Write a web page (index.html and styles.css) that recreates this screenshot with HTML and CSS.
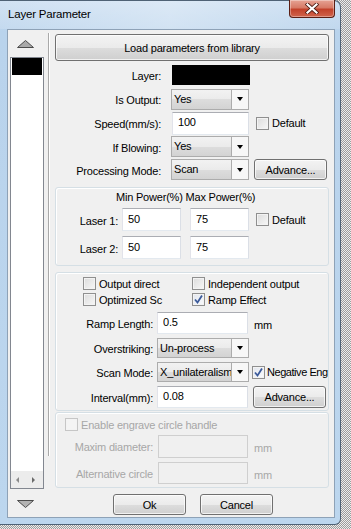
FILE: index.html
```html
<!DOCTYPE html>
<html>
<head>
    <meta charset="utf-8">
    <title>Layer Parameter</title>
    <link rel="stylesheet" href="styles.css">
</head>
<body>
    <div class="window">
        <!-- title bar -->
        <div class="titlebar">
            <span class="title">Layer Parameter</span>
            <span class="close-btn">
                <svg width="14" height="11" viewBox="0 0 14 11">
                    <path d="M2.5 1.5 L11.5 9.5 M11.5 1.5 L2.5 9.5" stroke="#4a1a12" stroke-width="3.8" stroke-linecap="square"/>
                    <path d="M2.5 1.5 L11.5 9.5 M11.5 1.5 L2.5 9.5" stroke="#fff" stroke-width="2.2" stroke-linecap="square"/>
                </svg>
            </span>
        </div>

        <div class="client">
            <!-- layer list -->
            <div class="side">
                <svg class="arrow arrow-up" width="17" height="8" viewBox="0 0 17 8">
                    <polygon points="8.5,0.5 16.5,7.5 0.5,7.5" fill="#a9a9a9" stroke="#4b4b4b"/>
                </svg>
                <div class="layer-list">
                    <div class="layer-item"></div>
                    <div class="list-scroll">
                        <span class="tri-l"></span>
                        <span class="tri-r"></span>
                    </div>
                </div>
                <svg class="arrow arrow-down" width="17" height="8" viewBox="0 0 17 8">
                    <polygon points="0.5,0.5 16.5,0.5 8.5,7.5" fill="#b3b3b3" stroke="#4b4b4b"/>
                </svg>
            </div>
            <div class="vsep"></div>

            <div class="main">
                <button class="btn btn-load">Load parameters from library</button>

                <div class="form-top">
                    <span class="lbl">Layer:</span>
                    <div class="color-box"></div>
                    <span></span>

                    <span class="lbl">Is Output:</span>
                    <div class="combo"><span class="combo-val">Yes</span><span class="combo-arrow"></span></div>
                    <span></span>

                    <span class="lbl">Speed(mm/s):</span>
                    <input class="tb tb-speed" type="text" value="100">
                    <label class="check"><span class="cb"></span>Default</label>

                    <span class="lbl">If Blowing:</span>
                    <div class="combo"><span class="combo-val">Yes</span><span class="combo-arrow"></span></div>
                    <span></span>

                    <span class="lbl">Processing Mode:</span>
                    <div class="combo"><span class="combo-val">Scan</span><span class="combo-arrow"></span></div>
                    <button class="btn btn-adv">Advance...</button>
                </div>

                <!-- power -->
                <div class="group group-power">
                    <div class="power-head">Min Power(%) Max Power(%)</div>
                    <div class="power-row">
                        <span class="power-lbl">Laser 1:</span>
                        <input class="tb tb-power" type="text" value="50">
                        <input class="tb tb-power tb-max" type="text" value="75">
                        <label class="check check-power"><span class="cb"></span>Default</label>
                    </div>
                    <div class="power-row power-row2">
                        <span class="power-lbl">Laser 2:</span>
                        <input class="tb tb-power" type="text" value="50">
                        <input class="tb tb-power tb-max" type="text" value="75">
                    </div>
                </div>

                <!-- scan options -->
                <div class="group group-scan">
                    <div class="check-grid">
                        <label class="check"><span class="cb"></span>Output direct</label>
                        <label class="check"><span class="cb"></span>Independent output</label>
                        <label class="check"><span class="cb"></span>Optimized Sc</label>
                        <label class="check"><span class="cb cb-on"><svg width="11" height="11" viewBox="0 0 11 11"><path d="M2 5.5 L4.5 8.5 L9 1.5" fill="none" stroke="#3b5a9a" stroke-width="1.8"/></svg></span>Ramp Effect</label>
                    </div>
                    <div class="row row-ramp">
                        <span class="lbl2">Ramp Length:</span>
                        <input class="tb tb-wide" type="text" value="0.5">
                        <span class="unit">mm</span>
                    </div>
                    <div class="row">
                        <span class="lbl2">Overstriking:</span>
                        <div class="combo combo-wide"><span class="combo-val">Un-process</span><span class="combo-arrow"></span></div>
                    </div>
                    <div class="row">
                        <span class="lbl2">Scan Mode:</span>
                        <div class="combo combo-wide"><span class="combo-val">X_unilateralism</span><span class="combo-arrow"></span></div>
                        <label class="check check-neg"><span class="cb cb-on"><svg width="11" height="11" viewBox="0 0 11 11"><path d="M2 5.5 L4.5 8.5 L9 1.5" fill="none" stroke="#3b5a9a" stroke-width="1.8"/></svg></span>Negative Eng</label>
                    </div>
                    <div class="row">
                        <span class="lbl2">Interval(mm):</span>
                        <input class="tb tb-wide" type="text" value="0.08">
                        <button class="btn btn-adv2">Advance...</button>
                    </div>
                </div>

                <!-- circle handle (disabled) -->
                <div class="group group-circle">
                    <label class="check check-off"><span class="cb"></span>Enable engrave circle handle</label>
                    <div class="row row-off">
                        <span class="lbl2">Maxim diameter:</span>
                        <input class="tb tb-wide" type="text" disabled>
                        <span class="unit">mm</span>
                    </div>
                    <div class="row row-off">
                        <span class="lbl2">Alternative circle</span>
                        <input class="tb tb-wide" type="text" disabled>
                        <span class="unit">mm</span>
                    </div>
                </div>

                <div class="actions">
                    <button class="btn btn-ok">Ok</button>
                    <button class="btn btn-cancel">Cancel</button>
                </div>
            </div>
        </div>
    </div>
</body>
</html>
```

FILE: styles.css
```css
 * {
     box-sizing: border-box;
 }
 html, body {
     margin: 0;
     padding: 0;
 }
 body {
     width: 351px;
     height: 529px;
     overflow: hidden;
     background-color: #ececec;
     background-image: repeating-conic-gradient(#9c9c9c 0 25%, #ededed 0 50%);
     background-size: 2px 2px;
     font-family: "Liberation Sans", Arial, sans-serif;
     font-size: 11px;
     letter-spacing: -0.2px;
     color: #000;
 }

 /*window frame*/
 .window {
     width: 341px;
     height: 525px;
     border: 1px solid #4f6275;
     border-left: none;
     border-radius: 0 7px 6px 0;
     background: linear-gradient(to bottom, #c9ddf1 0, #b9d3ec 30px, #bcd6ee 100%);
     padding: 0 5px 6px 7px;
     display: flex;
     flex-direction: column;
 }
 .titlebar {
     height: 28px;
     flex: none;
     display: flex;
     justify-content: space-between;
     align-items: flex-start;
     background: linear-gradient(to right, rgba(255,255,255,0.15), rgba(255,255,255,0.35) 50%, rgba(255,255,255,0.1));
     margin: 0 -5px 0 -7px;
     padding: 0 5px 0 8px;
     border-radius: 0 7px 0 0;
 }
 .title {
     font-size: 11.5px;
     line-height: 14px;
     padding-top: 6px;
     color: #000;
 }
 .close-btn {
     width: 46px;
     height: 18px;
     margin-top: -1px;
     border: 1px solid #5a1e14;
     border-top: none;
     border-radius: 0 0 4px 4px;
     background: linear-gradient(to bottom, #e6a394 0, #d77a66 45%, #c2412a 55%, #d0644c 100%);
     box-shadow: inset 0 0 0 1px rgba(255,255,255,0.35);
     display: flex;
     justify-content: center;
     align-items: center;
 }

 .client {
     flex: 1;
     display: flex;
     border: 1px solid #8ea2b7;
     background-color: #f0f0f0;
 }

 /*layer list column*/
 .side {
     width: 40px;
     flex: none;
     display: flex;
     flex-direction: column;
     padding-left: 2px;
 }
 .arrow {
     display: block;
     margin-left: 7px;
 }
 .arrow-up {
     margin-top: 10px;
 }
 .arrow-down {
     margin-top: 11px;
 }
 .layer-list {
     margin-top: 9px;
     width: 34px;
     height: 432px;
     border: 1px solid #828790;
     background-color: #fff;
     display: flex;
     flex-direction: column;
     justify-content: space-between;
 }
 .layer-item {
     height: 17px;
     margin: 0 1px;
     background-color: #000;
 }
 .list-scroll {
     height: 17px;
     background-color: #ececec;
     display: flex;
     align-items: center;
     justify-content: space-between;
     padding: 0 8px 0 5px;
 }
 .tri-l, .tri-r {
     width: 0;
     height: 0;
     border-top: 3px solid transparent;
     border-bottom: 3px solid transparent;
 }
 .tri-l {
     border-right: 3px solid #8a8a8a;
 }
 .tri-r {
     border-left: 3px solid #6a6a6a;
 }
 .vsep {
     width: 2px;
     height: 423px;
     margin-top: 3px;
     border-left: 1px solid #a9a9a9;
     border-right: 1px solid #fff;
 }

 /*main column*/
 .main {
     width: 274px;
     margin-left: 5px;
     display: flex;
     flex-direction: column;
 }
 .btn {
     font: inherit;
     letter-spacing: inherit;
     color: #000;
     padding: 0;
     border: 1px solid #707070;
     border-radius: 3px;
     background: linear-gradient(to bottom, #f3f3f3 0, #ebebeb 50%, #dddddd 50%, #cfcfcf 100%);
     box-shadow: inset 0 0 0 1px rgba(255,255,255,0.7);
 }
 .btn-load {
     margin-top: 4px;
     height: 27px;
     width: 274px;
     font-size: 11px;
 }

 .form-top {
     margin-top: 2px;
     display: grid;
     grid-template-columns: 116px 83px 1fr;
     grid-template-rows: 24px 24px 24px 23px 23px;
     align-items: center;
 }
 .lbl {
     text-align: right;
     padding-right: 10px;
     padding-top: 2px;
 }
 .color-box {
     margin-left: 1px;
     width: 78px;
     height: 20px;
     background-color: #000;
 }
 .combo {
     width: 78px;
     height: 21px;
     flex: none;
     display: flex;
     border: 1px solid #acacac;
     background-color: #f4f4f4;
 }
 .combo-val {
     flex: 1;
     min-width: 0;
     padding-left: 2px;
     line-height: 19px;
     white-space: nowrap;
     overflow: hidden;
     background: linear-gradient(to bottom, #f2f2f2 0, #ebebeb 50%, #dddddd 50%, #d3d3d3 100%);
     border-right: 1px solid #acacac;
 }
 .combo-arrow {
     width: 16px;
     flex: none;
     display: flex;
     justify-content: center;
     align-items: center;
     background-color: #f7f7f7;
 }
 .combo-arrow::after {
     content: "";
     border-left: 3.5px solid transparent;
     border-right: 3.5px solid transparent;
     border-top: 4px solid #000;
 }
 .tb {
     font: inherit;
     letter-spacing: inherit;
     color: #000;
     flex: none;
     padding: 0 0 2px 5px;
     margin: 0;
     border: 1px solid #abadb3;
     border-color: #abadb3 #dbdfe6 #e3e9ef #e2e3ea;
     background-color: #fff;
     outline: none;
 }
 .tb-speed {
     margin-left: 1px;
     width: 77px;
     height: 23px;
 }
 .check {
     display: flex;
     align-items: center;
     white-space: nowrap;
 }
 .cb {
     width: 13px;
     height: 13px;
     flex: none;
     margin-right: 3px;
     border: 1px solid #8f8f8f;
     background: linear-gradient(135deg, #dcdcdc, #f7f7f7);
     box-shadow: inset 0 0 0 1px #f3f3f3;
     display: flex;
     justify-content: center;
     align-items: center;
 }
 .cb-on {
     background: linear-gradient(135deg, #e2e6ee, #fafbfd);
 }
 .form-top .check {
     margin-left: 2px;
 }
 .btn-adv {
     width: 73px;
     height: 21px;
 }

 /*group boxes*/
 .group {
     border: 1px solid #d5dfe5;
     border-radius: 3px;
     box-shadow: inset 1px 1px 0 #fff;
 }
 .group-power {
     margin-top: 6px;
     height: 79px;
 }
 .power-head {
     height: 16px;
     margin-top: 1px;
     line-height: 16px;
     padding-left: 60px;
 }
 .power-row {
     display: flex;
     align-items: center;
     margin-top: 3px;
     height: 23px;
 }
 .power-row2 {
     margin-top: 5px;
 }
 .power-lbl {
     width: 66px;
     flex: none;
     text-align: right;
     padding-right: 4px;
     padding-top: 2px;
 }
 .tb-power {
     width: 59px;
     height: 23px;
 }
 .tb-max {
     margin-left: 9px;
 }
 .check-power {
     margin-left: 7px;
 }

 .group-scan {
     margin-top: 6px;
     height: 139px;
 }
 .check-grid {
     display: grid;
     grid-template-columns: 109px 1fr;
     row-gap: 3px;
     padding-left: 27px;
     margin-top: 4px;
 }
 .check-grid .check {
     height: 13px;
 }
 .row {
     display: flex;
     align-items: center;
     margin-top: 4px;
 }
 .row-ramp {
     margin-top: 6px;
 }
 .lbl2 {
     width: 97px;
     flex: none;
     text-align: right;
     padding-top: 1px;
     margin-right: 4px;
     white-space: nowrap;
 }
 .tb-wide {
     width: 91px;
     height: 22px;
 }
 .combo-wide {
     width: 92px;
     height: 20px;
 }
 .combo-wide .combo-val {
     line-height: 18px;
 }
 .unit {
     margin-left: 6px;
     padding-top: 3px;
 }
 .check-neg {
     margin-left: 3px;
     flex: none;
     letter-spacing: -0.45px;
 }
 .check-neg .cb {
     margin-right: 2px;
 }
 .btn-adv2 {
     margin-left: 5px;
     width: 73px;
     height: 22px;
 }

 .group-circle {
     margin-top: 1px;
     height: 76px;
     color: #a7a7a7;
 }
 .check-off {
     margin: 5px 0 0 9px;
 }
 .check-off .cb {
     border-color: #c6c6c6;
     background: #f4f4f4;
 }
 .row-off {
     margin-top: 4px;
 }
 .row-off .lbl2 {
     margin-right: 5px;
 }
 .row-off .tb {
     background-color: #f0f0f0;
     border-color: #cfcfcf;
     width: 90px;
     height: 23px;
 }
 .row-off + .row-off .tb {
     height: 22px;
 }
 .row-off .unit {
     margin-left: 6px;
 }

 .actions {
     display: flex;
     margin-top: 6px;
 }
 .btn-ok, .btn-cancel {
     width: 73px;
     height: 21px;
 }
 .btn-ok {
     margin-left: 58px;
 }
 .btn-cancel {
     margin-left: 14px;
 }
```
